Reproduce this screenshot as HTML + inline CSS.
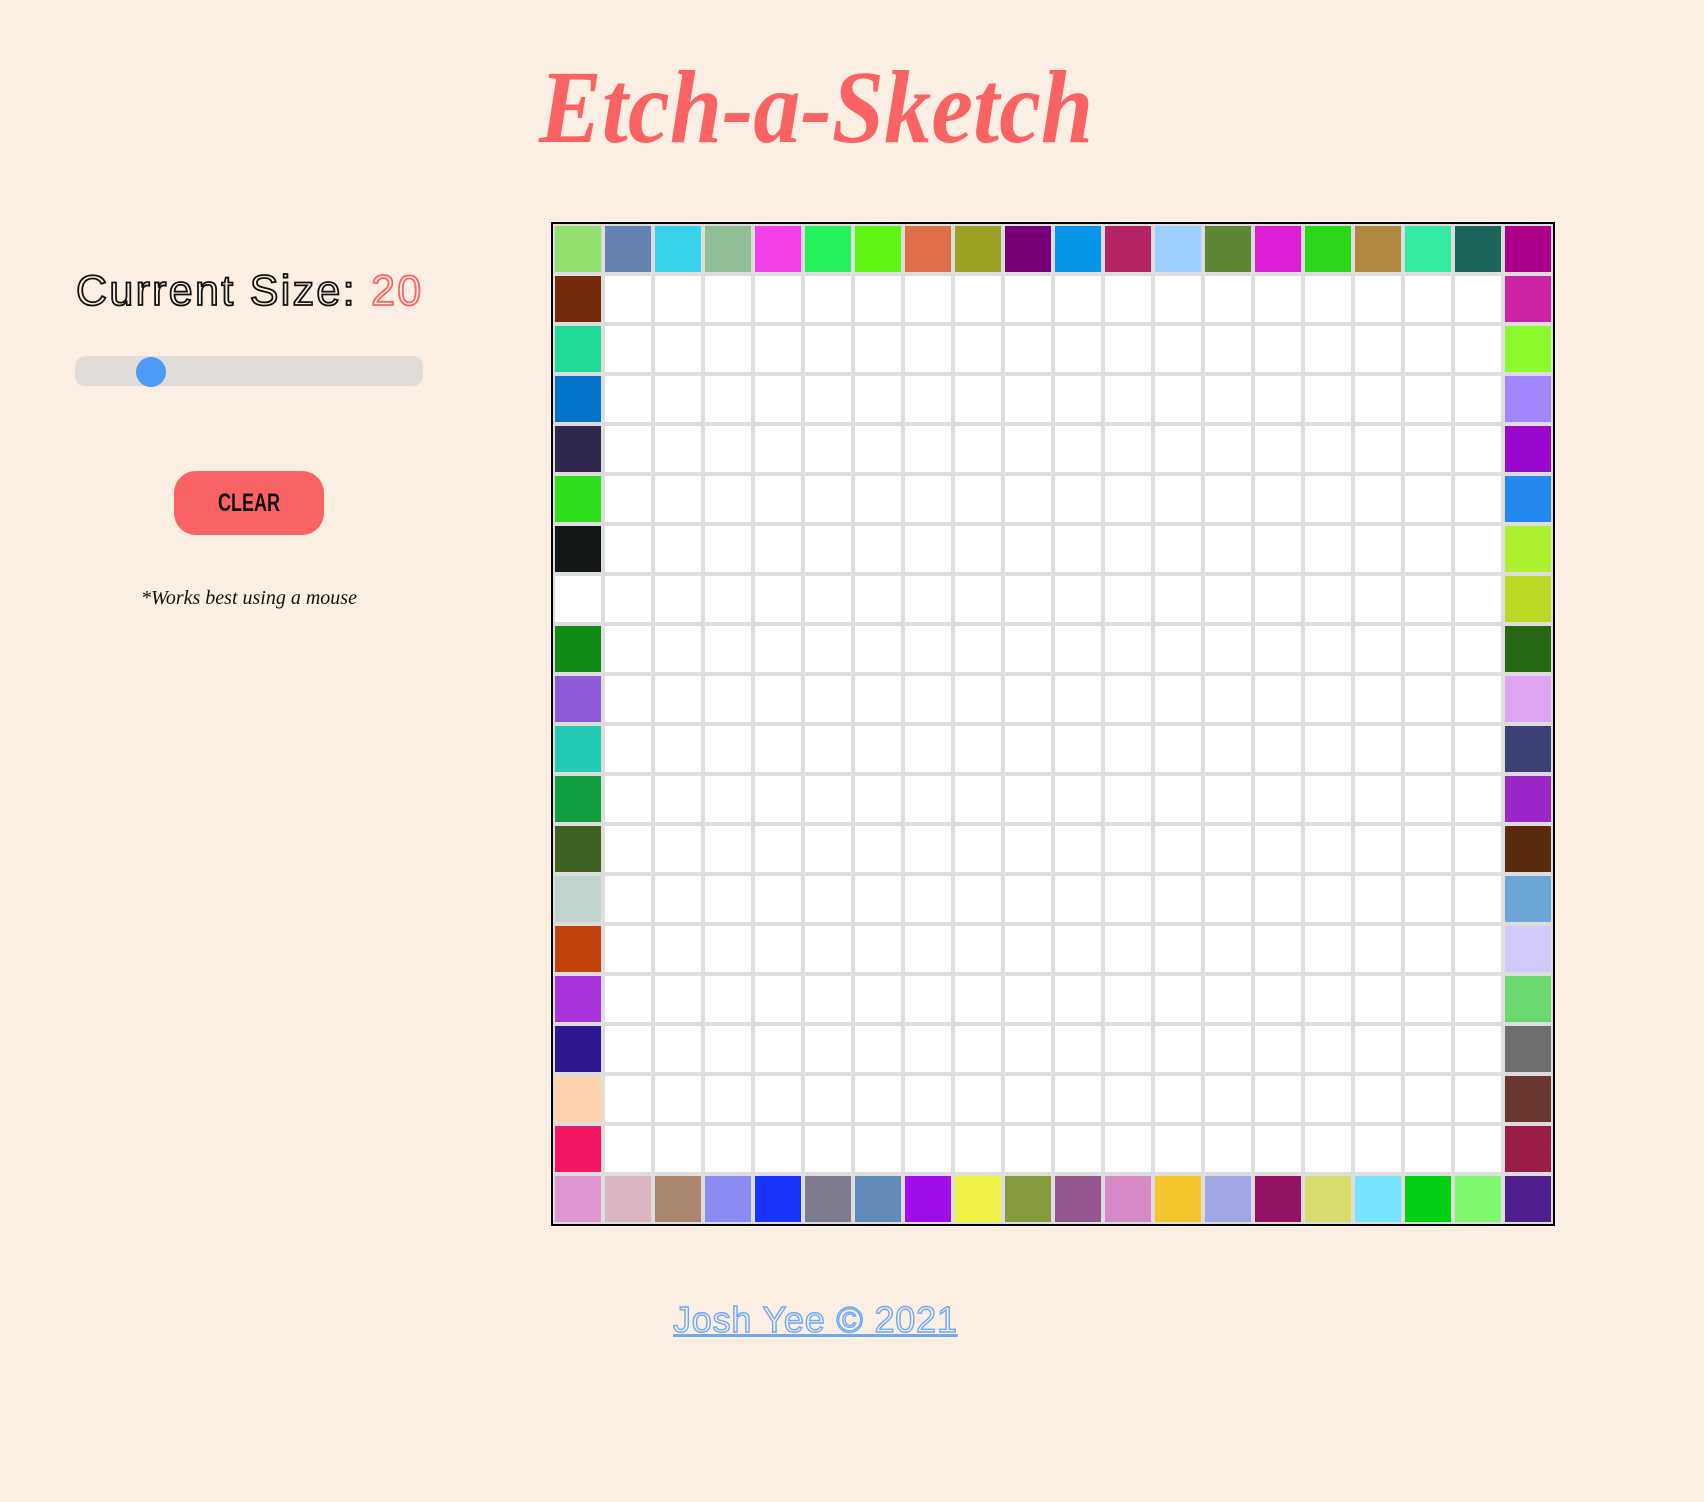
<!DOCTYPE html>
<html><head><meta charset="utf-8"><style>
html,body{margin:0;padding:0;background:#faefe2;width:1704px;height:1502px;overflow:hidden;position:relative;}
#title{position:absolute;left:539px;top:48px;width:554px;height:120px;color:#f96363;font-family:"Liberation Serif",serif;font-style:italic;font-weight:bold;font-size:104px;white-space:nowrap;line-height:120px;}
#title span{display:inline-block;transform-origin:left center;}
#size{position:absolute;left:76px;top:266px;font-family:"Liberation Sans",sans-serif;font-size:43px;line-height:50px;color:transparent;-webkit-text-stroke:1.8px #111;white-space:nowrap;letter-spacing:2.3px;}
#size b{font-weight:normal;-webkit-text-stroke:1.8px #f96363;}
#track{position:absolute;left:75px;top:356px;width:348px;height:30px;border-radius:10px;background:#e0dcd7;}
#thumb{position:absolute;left:136px;top:357px;width:30px;height:30px;border-radius:50%;background:#4d9bf7;}
#btn{position:absolute;left:174px;top:471px;width:150px;height:64px;border-radius:22px;background:#f96363;font-family:"Liberation Sans",sans-serif;font-weight:bold;font-size:25px;line-height:64px;text-align:center;color:#111;}
#btn span{display:inline-block;transform:scaleX(0.72);}
#note{position:absolute;left:76px;width:346px;top:586px;text-align:center;font-family:"Liberation Serif",serif;font-style:italic;font-size:20px;line-height:24px;color:#111;}
#grid{position:absolute;left:551px;top:222px;width:996px;height:996px;border:2px solid #000;padding:2px;background:#ddd;display:grid;grid-template-columns:repeat(20,46px);grid-template-rows:repeat(20,46px);gap:4px;}
#grid div{background:#fff;}
#foot{position:absolute;left:673px;top:1298px;font-family:"Liberation Sans",sans-serif;font-size:36px;line-height:44px;color:transparent;-webkit-text-stroke:1.4px #6fa8f5;text-decoration:underline;text-decoration-color:#6fa8f5;text-decoration-thickness:3px;white-space:nowrap;letter-spacing:0.8px;}
</style></head><body>
<div id="title"><span style="transform:scaleX(0.905)">Etch-a-Sketch</span></div>
<div id="size">Current Size: <b>20</b></div>
<div id="track"></div><div id="thumb"></div>
<div id="btn"><span>CLEAR</span></div>
<div id="note">*Works best using a mouse</div>
<div id="grid"></div>
<div id="foot">Josh Yee © 2021</div>
<script>
var top_=["#91e06e","#6583b1","#36d3ea","#8fbe97","#f43ee8","#25f25b","#5ff512","#de6e48","#9ca226","#770079","#0795e8","#b52362","#9ccfff","#5f8537","#dd1ed5","#2bd519","#b0873f","#33eba1","#1c655b","#ad008a"];
var left=["#732b0b","#20db98","#0375c9","#30274d","#2ee01a","#141718","#ffffff","#118a16","#8c5cda","#24cbb3","#119e41","#3f6121","#c3d4cf","#c1420c","#a733d9","#311893","#ffd3ae","#f31665"];
var right=["#cd22a6","#8bf92b","#a185fc","#9a07cc","#2289f0","#abf12e","#bbd824","#246812","#dfa4f4","#3b3f74","#9a26c7","#5a2a0d","#6ba6d6","#d0cafb","#6bd86e","#6e6e6c","#69372f","#9a1d47"];
var bot=["#df98d2","#dab6c2","#a8856b","#8a8cf3","#1833fc","#7e7c8c","#628bba","#a00de9","#eef346","#859a3e","#92578f","#d68bc8","#f5c52e","#a3a6e5","#931263","#d6dc6c","#75e3fb","#02d012","#7ff76f","#4d208d"];
var g=document.getElementById('grid'),h='';
for(var r=0;r<20;r++)for(var c=0;c<20;c++){var col='#fff';
if(r==0)col=top_[c];else if(r==19)col=bot[c];else if(c==0)col=left[r-1];else if(c==19)col=right[r-1];
h+='<div style="background:'+col+'"></div>';}
g.innerHTML=h;
</script>
</body></html>
